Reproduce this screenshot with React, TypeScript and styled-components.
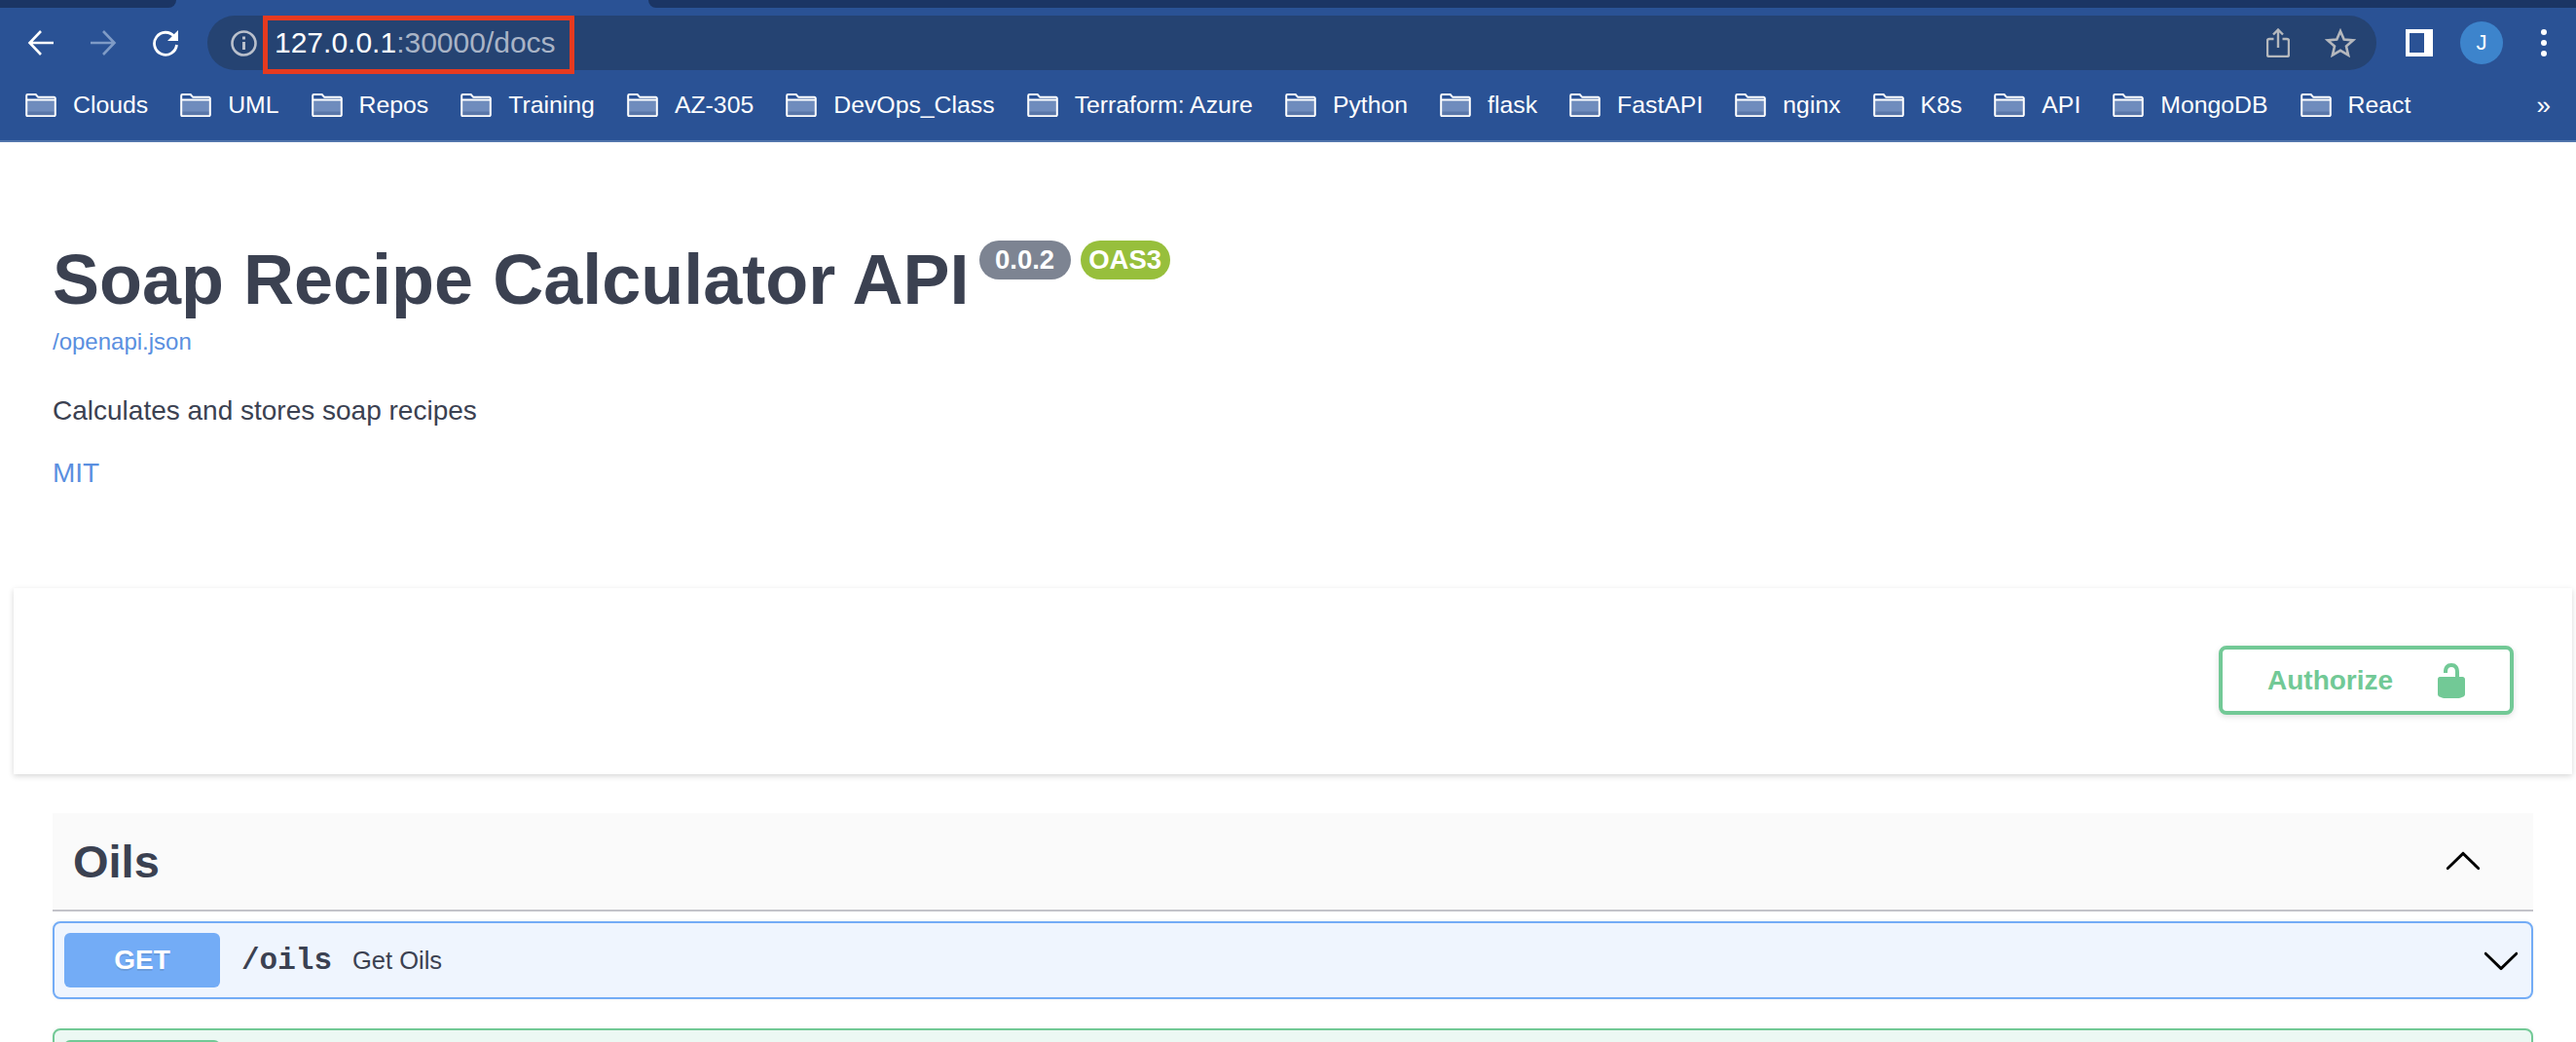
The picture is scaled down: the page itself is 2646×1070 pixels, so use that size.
import React, { FC } from 'react';
import styled, { createGlobalStyle } from 'styled-components';

const GlobalStyle = createGlobalStyle`
  html, body {
    margin: 0;
    padding: 0;
    background: #fff;
  }
  body {
    font-family: "Liberation Sans", Arial, sans-serif;
    color: #3b4151;
  }
`;

const BOOKMARKS = [
  'Clouds', 'UML', 'Repos', 'Training', 'AZ-305', 'DevOps_Class', 'Terraform: Azure', 'Python',
  'flask', 'FastAPI', 'nginx', 'K8s', 'API', 'MongoDB', 'React',
];

const Page = styled.div`
  width: 2646px;
  height: 1070px;
  overflow: hidden;
`;

const Browser = styled.header`
  background: #2a5295;
  border-bottom: 2px solid #5275ac;
`;

const TabStrip = styled.div`
  display: flex;
  height: 8px;
`;

const InactiveTab = styled.div<{ $side: 'left' | 'right' }>`
  background: #1b3564;
  width: ${p => (p.$side === 'left' ? '181px' : 'auto')};
  flex: ${p => (p.$side === 'left' ? 'none' : '1')};
  margin-left: ${p => (p.$side === 'left' ? '0' : '485px')};
  border-radius: ${p => (p.$side === 'left' ? '0 0 12px 0' : '0 0 0 12px')};
`;

const Toolbar = styled.div`
  display: flex;
  align-items: center;
  height: 56px;
  margin-top: 8px;
  padding-left: 28px;
`;

const NavButton = styled.button<{ $dim?: boolean }>`
  display: flex;
  align-items: center;
  justify-content: center;
  width: 28px;
  height: 28px;
  margin-right: 36px;
  padding: 0;
  border: 0;
  background: none;
  color: ${p => (p.$dim ? '#7f9bc6' : '#fff')};
`;

const Omnibox = styled.div`
  position: relative;
  display: flex;
  align-items: center;
  box-sizing: border-box;
  width: 2228px;
  height: 56px;
  margin-left: -7px;
  padding: 0 21px 0 24px;
  background: #254372;
  border-radius: 28px;
`;

const InfoIcon = styled.span`
  display: flex;
  color: #b9c0cc;
  margin-right: 18px;
`;

const Url = styled.div`
  flex: 1;
  font-size: 30px;
  color: #a9b4c6;
  white-space: nowrap;
`;

const UrlHost = styled.span`
  color: #fff;
`;

const Annotation = styled.div`
  position: absolute;
  left: 57px;
  top: 0;
  box-sizing: border-box;
  width: 320px;
  height: 60px;
  border: 5px solid #e63a1f;
`;

const OmniAction = styled.span<{ $gap?: number }>`
  display: flex;
  color: #b5b8bd;
  margin-left: ${p => p.$gap ?? 0}px;
`;

const SidePanel = styled.div`
  box-sizing: border-box;
  width: 28px;
  height: 28px;
  margin-left: 30px;
  background: #2a5295;
  border: solid #fff;
  border-width: 4px 9px 4px 4px;
`;

const Avatar = styled.div`
  display: flex;
  align-items: center;
  justify-content: center;
  width: 44px;
  height: 44px;
  margin-left: 28px;
  border-radius: 50%;
  background: #3d84cc;
  color: #fff;
  font-size: 22px;
`;

const KebabDots = styled.div`
  display: flex;
  flex-direction: column;
  gap: 5px;
  margin-left: 39px;
`;

const Dot = styled.span`
  width: 6px;
  height: 6px;
  border-radius: 50%;
  background: #fff;
`;

const BookmarkBar = styled.nav`
  display: flex;
  align-items: center;
  height: 72px;
  padding-left: 26px;
`;

const Bookmark = styled.a`
  display: flex;
  align-items: center;
  gap: 17px;
  margin-right: 33px;
  color: #fff;
  font-size: 24.8px;
  white-space: nowrap;
`;

const Overflow = styled.span`
  margin-left: auto;
  margin-right: 26px;
  color: #fff;
  font-size: 26px;
`;

const Info = styled.section`
  padding: 99px 54px 0;
  height: 458px;
  box-sizing: border-box;
`;

const TitleRow = styled.div`
  display: flex;
  align-items: flex-start;
  gap: 10px;
`;

const Title = styled.h1`
  margin: 0;
  font-size: 72px;
  line-height: 84px;
  font-weight: 700;
  color: #3b4151;
  white-space: nowrap;
`;

const Badge = styled.span<{ $bg: string; $width: number }>`
  display: flex;
  align-items: center;
  justify-content: center;
  box-sizing: border-box;
  height: 40px;
  width: ${p => p.$width}px;
  margin-top: 2px;
  border-radius: 20px;
  background: ${p => p.$bg};
  color: #fff;
  font-size: 27.5px;
  font-weight: 700;
`;

const SpecLink = styled.a`
  display: block;
  margin-top: 7px;
  color: #5a8fe0;
  font-size: 24px;
  line-height: 30px;
`;

const Description = styled.p`
  margin: 38px 0 0;
  font-size: 28px;
  line-height: 36px;
  color: #3b4151;
`;

const License = styled.a`
  display: block;
  margin-top: 28px;
  color: #5a8fe0;
  font-size: 28px;
  line-height: 36px;
`;

const SchemeBar = styled.section`
  display: flex;
  align-items: flex-start;
  justify-content: flex-end;
  box-sizing: border-box;
  height: 191px;
  margin: 0 4px 0 14px;
  padding: 59px 60px 0 0;
  background: #fff;
  box-shadow: 0 2px 6px rgba(0, 0, 0, .16);
`;

const AuthorizeButton = styled.button`
  display: flex;
  align-items: center;
  justify-content: space-between;
  box-sizing: border-box;
  width: 303px;
  height: 71px;
  padding: 0 40px 0 46px;
  background: #fff;
  border: 4px solid #72c996;
  border-radius: 8px;
  box-shadow: 0 2px 6px rgba(0, 0, 0, .12);
  color: #72c996;
  font-family: inherit;
  font-size: 28px;
  font-weight: 700;
`;

const Operations = styled.main`
  margin: 40px 44px 0 54px;
`;

const TagHeader = styled.div`
  display: flex;
  align-items: center;
  justify-content: space-between;
  box-sizing: border-box;
  height: 101px;
  padding: 0 52px 0 21px;
  background: #fafafa;
  border-bottom: 2px solid #c3c3c9;
`;

const TagName = styled.h3`
  margin: 0;
  font-size: 47px;
  font-weight: 700;
  color: #3b4151;
`;

const Chevron = styled.svg<{ $up?: boolean }>`
  display: block;
  width: 40px;
  height: 40px;
  color: #000;
  transform: ${p => (p.$up ? 'rotate(180deg)' : 'none')};
`;

const OpRow = styled.div<{ $border: string; $bg: string }>`
  display: flex;
  align-items: center;
  box-sizing: border-box;
  height: 80px;
  margin-bottom: 30px;
  padding: 0 11px 0 10px;
  background: ${p => p.$bg};
  border: 2px solid ${p => p.$border};
  border-radius: 8px;
  box-shadow: 0 0 4px rgba(0, 0, 0, .06);
`;

const OpList = styled.div`
  margin-top: 10px;
`;

const MethodBadge = styled.span<{ $bg: string }>`
  display: flex;
  align-items: center;
  justify-content: center;
  width: 160px;
  height: 56px;
  border-radius: 6px;
  background: ${p => p.$bg};
  color: #fff;
  font-size: 28px;
  font-weight: 700;
  text-shadow: 0 2px 0 rgba(0, 0, 0, .1);
`;

const OpPath = styled.span`
  margin-left: 22px;
  font-family: "Liberation Mono", "Courier New", monospace;
  font-size: 31px;
  font-weight: 700;
  color: #3b4151;
`;

const OpSummary = styled.span`
  flex: 1;
  margin-left: 21px;
  font-size: 25.5px;
  color: #3b4151;
`;

const FolderIcon: FC = () => (
  <svg width="32" height="24" viewBox="0 0 32 24" fill="none">
    <path d="M2 6h28v17H2z" fill="#6f8cbd" />
    <path d="M2 18.500h28V23H2z" fill="#5a77a9" />
    <path d="M1.200 2.200A1.200 1.200 0 0 1 2.400 1h8.300l2.500 2.800h16.400a1.200 1.200 0 0 1 1.200 1.200v17a1.200 1.200 0 0 1-1.200 1.200H2.400A1.200 1.200 0 0 1 1.200 22zM1.200 6.500h29.600" stroke="#fff" strokeWidth="2" />
  </svg>
);

const ChevronDownIcon: FC<{ up?: boolean }> = ({ up }) => (
  <Chevron $up={up} viewBox="0 0 20 20" fill="currentColor">
    <path d="M17.418 6.109c.272-.268.709-.268.979 0s.271.701 0 .969l-7.908 7.830c-.270.268-.707.268-.979 0l-7.908-7.830c-.270-.268-.270-.701 0-.969.271-.268.709-.268.979 0L10 13.250l7.418-7.141z" />
  </Chevron>
);

const App: FC = () => (
  <Page>
    <GlobalStyle />
    <Browser>
      <TabStrip>
        <InactiveTab $side="left" />
        <InactiveTab $side="right" />
      </TabStrip>
      <Toolbar>
        <NavButton>
          <svg width="28" height="28" viewBox="0 0 28 28" fill="none" stroke="currentColor" strokeWidth="2.600">
            <path d="M27 14H3M14 2 2.500 14 14 26" />
          </svg>
        </NavButton>
        <NavButton $dim>
          <svg width="28" height="28" viewBox="0 0 28 28" fill="none" stroke="currentColor" strokeWidth="2.600">
            <path d="M1 14h24M14 2l11.500 12L14 26" />
          </svg>
        </NavButton>
        <NavButton>
          <svg width="28" height="28" viewBox="0 0 28 28" fill="none">
            <path d="M23 7.500A11.500 11.500 0 1 0 25.500 16" stroke="currentColor" strokeWidth="2.800" />
            <path d="M27 1v11H16z" fill="currentColor" />
          </svg>
        </NavButton>
        <Omnibox>
          <InfoIcon>
            <svg width="27" height="27" viewBox="0 0 27 27" fill="none" stroke="currentColor">
              <circle cx="13.500" cy="13.500" r="12" strokeWidth="2.600" />
              <path d="M13.500 12v8" strokeWidth="3" />
              <path d="M13.500 6.500v3" strokeWidth="3" />
            </svg>
          </InfoIcon>
          <Url>
            <UrlHost>127.0.0.1</UrlHost>:30000/docs
          </Url>
          <Annotation />
          <OmniAction>
            <svg width="24" height="30" viewBox="0 0 24 30" fill="none" stroke="currentColor" strokeWidth="2.400">
              <path d="M7.500 11H3a2 2 0 0 0-2 2v14a2 2 0 0 0 2 2h18a2 2 0 0 0 2-2V13a2 2 0 0 0-2-2h-4.500M12 20V2M7 6.500 12 1.500l5 5" />
            </svg>
          </OmniAction>
          <OmniAction $gap={36}>
            <svg width="32" height="30" viewBox="0 0 32 30" fill="none" stroke="currentColor" strokeWidth="2.600">
              <path d="m16 3 3.700 8.600 9.300.8-7 6.100 2.100 9.100L16 22.800l-8.100 4.800L10 18.500l-7-6.100 9.300-.8z" />
            </svg>
          </OmniAction>
        </Omnibox>
        <SidePanel />
        <Avatar>J</Avatar>
        <KebabDots>
          <Dot />
          <Dot />
          <Dot />
        </KebabDots>
      </Toolbar>
      <BookmarkBar>
        {BOOKMARKS.map(name => (
          <Bookmark key={name}>
            <FolderIcon />
            {name}
          </Bookmark>
        ))}
        <Overflow>»</Overflow>
      </BookmarkBar>
    </Browser>
    <Info>
      <TitleRow>
        <Title>Soap Recipe Calculator API</Title>
        <Badge $bg="#7d8492" $width={94}>0.0.2</Badge>
        <Badge $bg="#97bf3c" $width={92}>OAS3</Badge>
      </TitleRow>
      <SpecLink>/openapi.json</SpecLink>
      <Description>Calculates and stores soap recipes</Description>
      <License>MIT</License>
    </Info>
    <SchemeBar>
      <AuthorizeButton>
        Authorize
        <svg width="40" height="40" viewBox="0 0 20 20" fill="currentColor">
          <path d="M15.800 8H14V5.600C14 2.703 12.665 1 10 1 7.334 1 6 2.703 6 5.600V6h2v-.801C8 3.754 8.797 3 10 3c1.203 0 2 .754 2 2.199V8H4c-.553 0-1 .646-1 1.199V17c0 .549.428 1.139.951 1.307l1.197.387C5.672 18.861 6.550 19 7.100 19h5.800c.549 0 1.428-.139 1.951-.307l1.196-.387c.524-.167.953-.757.953-1.306V9.199C17 8.646 16.352 8 15.800 8z" />
        </svg>
      </AuthorizeButton>
    </SchemeBar>
    <Operations>
      <TagHeader>
        <TagName>Oils</TagName>
        <ChevronDownIcon up />
      </TagHeader>
      <OpList>
        <OpRow $border="#73acf6" $bg="#eff5fe">
          <MethodBadge $bg="#73acf6">GET</MethodBadge>
          <OpPath>/oils</OpPath>
          <OpSummary>Get Oils</OpSummary>
          <ChevronDownIcon />
        </OpRow>
        <OpRow $border="#72c996" $bg="#ecf8f3">
          <MethodBadge $bg="#72c996" />
        </OpRow>
      </OpList>
    </Operations>
  </Page>
);

export default App;
